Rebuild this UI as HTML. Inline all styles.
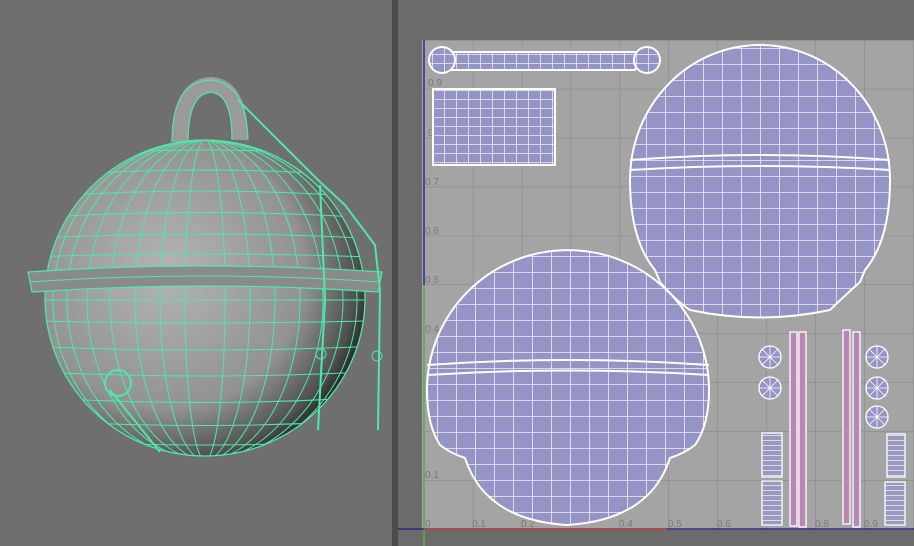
<!DOCTYPE html>
<html><head><meta charset="utf-8"><style>
html,body{margin:0;padding:0;width:914px;height:546px;overflow:hidden;background:#6d6d6d}
svg{display:block}
text{font-family:"Liberation Sans",sans-serif;font-size:10px;fill:#7a7a7a}
</style></head><body>
<svg width="914" height="546" viewBox="0 0 914 546" xmlns="http://www.w3.org/2000/svg">
<defs>
<radialGradient id="sph" cx="0.38" cy="0.42" r="0.66">
<stop offset="0" stop-color="#b4b4b4"/><stop offset="0.65" stop-color="#929292"/><stop offset="0.9" stop-color="#505050"/><stop offset="1" stop-color="#1c1c1c"/>
</radialGradient>
<pattern id="uvg" x="0" y="0" width="19" height="16" patternUnits="userSpaceOnUse">
<rect width="19" height="16" fill="#9494c6"/><path d="M0 0H19M0 0V16" stroke="#fff" stroke-width="1.3"/>
</pattern>
<pattern id="uvr" width="12" height="9" patternUnits="userSpaceOnUse">
<rect width="12" height="9" fill="#9494c6"/><path d="M0 0H12M0 0V9" stroke="#fff" stroke-width="1.3"/>
</pattern>
<pattern id="grid" x="424" y="40" width="48.9" height="48.9" patternUnits="userSpaceOnUse">
<rect width="49" height="49" fill="#a4a4a4"/><path d="M0 0H49M0 0V49" stroke="#858585" stroke-width="1"/>
</pattern>
<pattern id="bars" width="20" height="5" patternUnits="userSpaceOnUse">
<rect width="20" height="5" fill="#9a9ac0"/><path d="M0 0H20" stroke="#fff" stroke-width="1.2"/>
</pattern>
<clipPath id="s1"><ellipse cx="205" cy="298" rx="160" ry="158"/></clipPath>
</defs>
<rect x="0" y="0" width="392" height="546" fill="#6f6f6f"/>
<rect x="392" y="0" width="6" height="546" fill="#4c4c4c"/>
<rect x="398" y="0" width="516" height="546" fill="#6b6b6b"/>
<path d="M180 142 Q180 85 212 85 Q240 88 240 140" fill="none" stroke="#9a9a9a" stroke-width="16"/>
<path d="M172 142 Q172 80 212 80 Q246 84 248 140 M188 142 Q188 93 212 92 Q232 95 232 140" fill="none" stroke="#4fe8a8" stroke-width="1.2"/>
<ellipse cx="205" cy="298" rx="160" ry="158" fill="url(#sph)"/>
<g clip-path="url(#s1)" fill="none" stroke="#4fe8a8" stroke-width="1">
<ellipse cx="205" cy="300" rx="20" ry="160"/><ellipse cx="205" cy="300" rx="45" ry="160"/><ellipse cx="205" cy="300" rx="70" ry="160"/><ellipse cx="205" cy="300" rx="95" ry="160"/><ellipse cx="205" cy="300" rx="118" ry="160"/><ellipse cx="205" cy="300" rx="138" ry="160"/><ellipse cx="205" cy="300" rx="152" ry="160"/>
<path d="M0 160Q205 140 400 160M0 180Q205 160 400 180M0 200Q205 182 400 200M0 220Q205 205 400 220M0 240Q205 228 400 240M0 258Q205 250 400 258M0 300H400M0 320Q205 326 400 320M0 345Q205 355 400 345M0 370Q205 382 400 370M0 395Q205 410 400 395M0 418Q205 433 400 418M0 438Q205 452 400 438"/>
</g>
<ellipse cx="205" cy="298" rx="160" ry="158" fill="none" stroke="#4fe8a8" stroke-width="1.3"/>
<path d="M28 272 Q205 260 382 272 L378 292 Q205 280 32 292Z" fill="#8a8a8a" stroke="#4fe8a8" stroke-width="1.2"/>
<path d="M30 282 Q205 270 380 282" fill="none" stroke="#4fe8a8"/>
<path d="M238 100 L318 180 L345 205 L375 245 L380 290 L378 430 M320 185 L325 300 L318 430" fill="none" stroke="#4fe8a8" stroke-width="2"/>
<circle cx="321" cy="354" r="5" fill="none" stroke="#4fe8a8"/><circle cx="377" cy="356" r="5" fill="none" stroke="#4fe8a8"/>
<circle cx="118" cy="383" r="13" fill="none" stroke="#4fe8a8" stroke-width="2"/>
<path d="M110 390 L160 452" stroke="#4fe8a8" stroke-width="2"/>
<rect x="422" y="40" width="492" height="490" fill="url(#grid)"/>
<line x1="424" y1="40" x2="424" y2="285" stroke="#2a2aa0" stroke-width="1.5"/>
<line x1="424" y1="285" x2="424" y2="546" stroke="#50b050" stroke-width="1.5"/>
<line x1="398" y1="529" x2="914" y2="529" stroke="#2a2a80" stroke-width="1.5"/>
<line x1="424" y1="529" x2="667" y2="529" stroke="#c04040" stroke-width="1.5"/>
<g>
<text x="428" y="86">0.9</text><text x="428" y="136">0.</text><text x="425" y="185">0.7</text><text x="425" y="234">0.6</text><text x="425" y="283">0.5</text><text x="425" y="332">0.4</text><text x="425" y="478">0.1</text>
<text x="425" y="527">0</text><text x="472" y="527">0.1</text><text x="521" y="527">0.2</text><text x="619" y="527">0.4</text><text x="668" y="527">0.5</text><text x="717" y="527">0.6</text><text x="815" y="527">0.8</text><text x="864" y="527">0.9</text>
</g>
<path d="M450 52 H635 L640 60 L635 70 H450 L445 60Z" fill="url(#uvr)" stroke="#fff" stroke-width="2"/>
<circle cx="442" cy="60" r="13" fill="url(#uvr)" stroke="#fff" stroke-width="2"/>
<circle cx="647" cy="60" r="13" fill="url(#uvr)" stroke="#fff" stroke-width="2"/>
<rect x="433" y="89" width="122" height="76" fill="url(#uvr)" stroke="#fff" stroke-width="2"/>
<path d="M630 180 A130 135 0 0 1 890 180 Q890 240 865 270 L860 282 Q840 300 830 310 Q760 325 690 310 Q675 300 660 282 L655 270 Q630 240 630 180Z" fill="url(#uvg)" stroke="#fff" stroke-width="2"/>
<path d="M630 160 Q760 150 890 160 M630 170 Q760 162 890 170" stroke="#fff" stroke-width="2" fill="none"/>
<path d="M427 390 A141 140 0 0 1 709 390 Q709 425 695 445 Q685 453 670 458 Q650 520 567 525 Q485 520 465 458 Q450 453 440 445 Q427 425 427 390Z" fill="url(#uvg)" stroke="#fff" stroke-width="2"/>
<path d="M427 365 Q567 355 709 365 M427 375 Q567 366 709 375" stroke="#fff" stroke-width="2" fill="none"/>
<g fill="#9494c6" stroke="#fff" stroke-width="1.3">
<circle cx="770" cy="357" r="11"/><circle cx="770" cy="388" r="11"/><circle cx="877" cy="357" r="11"/><circle cx="877" cy="388" r="11"/><circle cx="877" cy="417" r="11"/>
</g>
<g stroke="#fff" stroke-width="0.8">
<path d="M759 357H781M770 346V368M762 349L778 365M778 349L762 365M759 388H781M770 377V399M762 380L778 396M778 380L762 396M866 357H888M877 346V368M869 349L885 365M885 349L869 365M866 388H888M877 377V399M869 380L885 396M885 380L869 396M866 417H888M877 406V428M869 409L885 425M885 409L869 425"/>
</g>
<g fill="#b888b4" stroke="#fff" stroke-width="1.3">
<rect x="790" y="332" width="7" height="194"/><rect x="799" y="332" width="7" height="195"/><rect x="843" y="330" width="7" height="194"/><rect x="853" y="332" width="7" height="195"/>
</g>
<g fill="url(#bars)" stroke="#fff" stroke-width="1.3">
<rect x="762" y="433" width="20" height="44"/><rect x="762" y="481" width="20" height="44"/><rect x="887" y="434" width="18" height="43"/><rect x="885" y="482" width="20" height="43"/>
</g>
</svg>
</body></html>
